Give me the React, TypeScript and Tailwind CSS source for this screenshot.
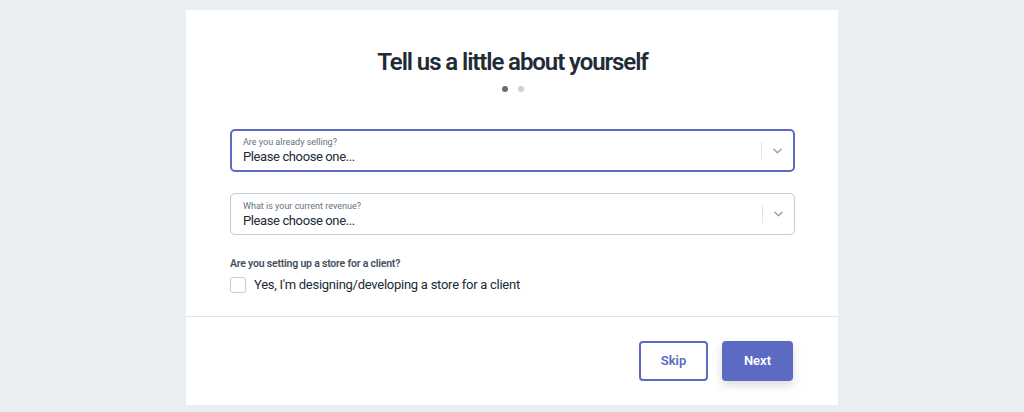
import { useState } from 'react'

const Chevron = () => (
  <svg viewBox="0 0 10 6" className="w-[9px] h-[6px]" fill="none" stroke="#919eab" strokeWidth="1.5" strokeLinecap="round" strokeLinejoin="round">
    <path d="M1 1l4 4 4-4" />
  </svg>
)

const SelectField = ({ label, focused }: { label: string; focused?: boolean }) => (
  <div
    className={`flex items-center rounded-[5px] bg-white ${
      focused ? 'border-2 border-[#5c6ac4] h-[43px] pl-[11px]' : 'border border-[#c4cdd5] h-[42px] pl-[12px]'
    }`}
  >
    <div className="flex-1 flex flex-col justify-center pt-[1px]">
      <span className="text-[9px] leading-[11px] text-[#637381]">{label}</span>
      <span className="text-[13px] leading-[17px] text-[#212b36] tracking-[-0.03em]">Please choose one...</span>
    </div>
    <div className="w-px h-[17px] bg-[#dfe3e8]" />
    <div className="w-[31px] flex items-center justify-center">
      <Chevron />
    </div>
  </div>
)

export default function App() {
  const [client, setClient] = useState(false)

  return (
    <div className="min-h-screen h-[412px] bg-[#ebeef0] pt-[10px] font-['Roboto',sans-serif]">
      <div className="mx-auto w-[652px] h-[395px] bg-white flex flex-col">
        <div className="px-[44px] pr-[43px] flex flex-col">
          <h1 className="mt-[36px] h-[32px] text-center text-[24px] leading-[32px] font-semibold text-[#212b36] tracking-[-0.045em]">
            Tell us a little about yourself
          </h1>
          <div className="mt-[8px] flex justify-center gap-[10px]">
            <span className="w-[6px] h-[6px] rounded-full bg-[#6d6d6d]" />
            <span className="w-[6px] h-[6px] rounded-full bg-[#cfcfcf]" />
          </div>

          <div className="mt-[37px]">
            <SelectField label="Are you already selling?" focused />
          </div>
          <div className="mt-[21px]">
            <SelectField label="What is your current revenue?" />
          </div>

          <p className="mt-[21px] text-[10.5px] leading-[16px] font-semibold text-[#454f5b] tracking-[-0.02em]">
            Are you setting up a store for a client?
          </p>
          <label className="mt-[5px] flex items-center gap-[8px] cursor-pointer">
            <button
              type="button"
              onClick={() => setClient(!client)}
              className="w-[16px] h-[16px] rounded-[3px] border border-[#c4cdd5] bg-white"
            />
            <span className="text-[13px] leading-[16px] text-[#212b36] tracking-[-0.02em]">
              Yes, I'm designing/developing a store for a client
            </span>
          </label>
        </div>

        <div className="mt-[23px] border-t border-[#dfe3e8]" />

        <div className="flex justify-end gap-[14px] pt-[24px] pr-[45px]">
          <button className="w-[69px] h-[40px] rounded-[4px] border-2 border-[#5c6ac4] bg-white text-[#5c6ac4] text-[13px] font-semibold">
            Skip
          </button>
          <button className="w-[71px] h-[40px] rounded-[4px] bg-[#5c6ac4] text-white text-[13px] font-semibold shadow-[0_4px_10px_rgba(0,0,0,0.15)]">
            Next
          </button>
        </div>
      </div>
    </div>
  )
}
